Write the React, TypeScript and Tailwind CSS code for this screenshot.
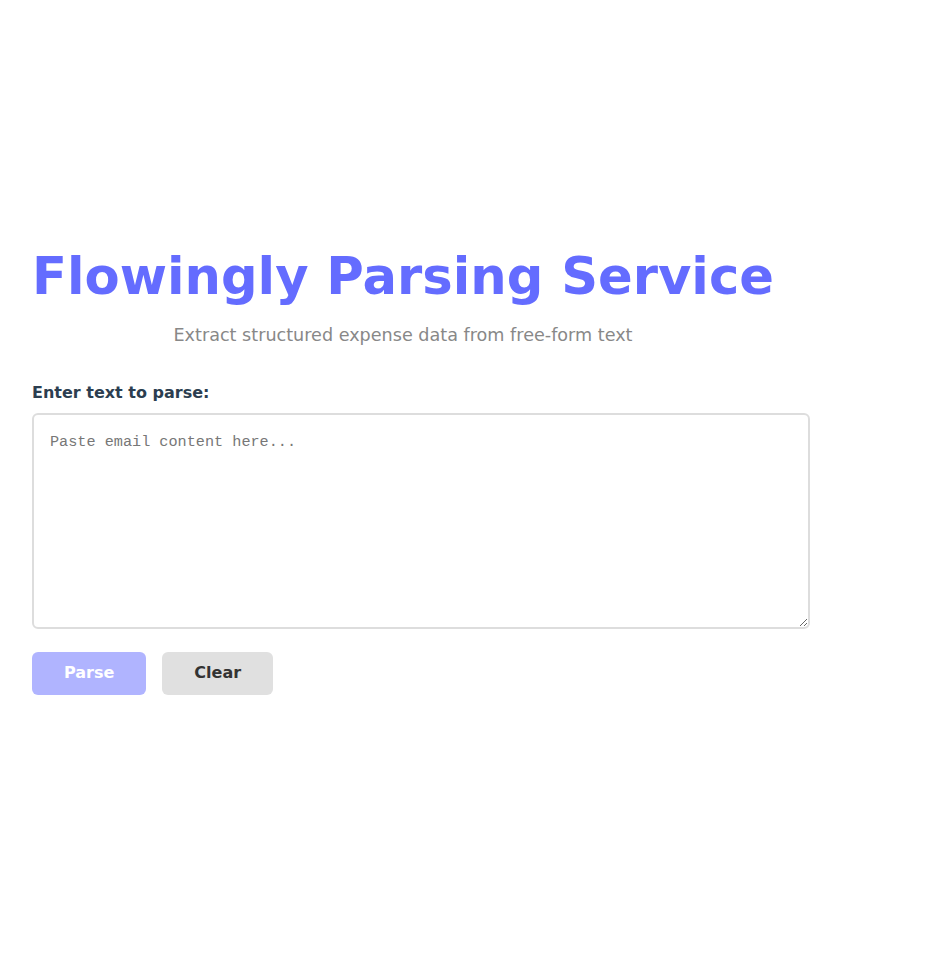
import { useState } from "react";

const App = () => {
  const [text, setText] = useState("")

  return (
    <div className="min-h-screen flex items-center bg-white" style={{ fontFamily: "'DejaVu Sans', sans-serif" }}>
      <div className="w-full px-8 pb-[30px]">
        {/* header */}
        <div className="inline-block text-center">
          <h1 className="text-[51.2px] leading-[1.1] font-bold text-[#646cff] m-0">Flowingly Parsing Service</h1>
          <p className="mt-[18px] text-[17.6px] text-[#888]">Extract structured expense data from free-form text</p>
        </div>

        <div className="mt-8">
          <label className="block font-bold text-[16px] text-[#2c3e50] mb-2">Enter text to parse:</label>
          <textarea
            value={text}
            onChange={(e) => setText(e.target.value)}
            placeholder="Paste email content here..."
            className="block w-[778px] h-[216px] border-2 border-[#ddd] rounded-md p-4 text-[15.2px] placeholder:text-[#777] outline-none"
            style={{ fontFamily: "'Liberation Mono', monospace" }}
          />
        </div>

        <div className="flex gap-4 mt-[23px]">
          <button disabled={!text} className="h-[43px] px-8 rounded-md bg-[#646cff] disabled:opacity-50 text-white font-bold text-[16px]">
            Parse
          </button>
          <button onClick={() => setText("")} className="h-[43px] px-8 rounded-md bg-[#e0e0e0] text-[#333] font-bold text-[16px]">
            Clear
          </button>
        </div>
      </div>
    </div>
  )
}
export default App
